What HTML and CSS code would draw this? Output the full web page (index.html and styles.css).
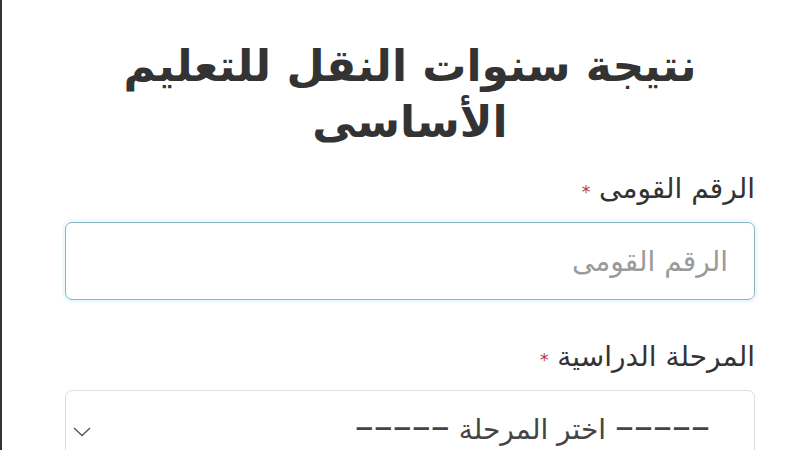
FILE: index.html
```html
<!DOCTYPE html>
<html lang="ar" dir="rtl">
<head>
<meta charset="utf-8">
<link rel="stylesheet" href="styles.css">
</head>
<body>
<div class="page">
  <div class="form">
    <h1 class="title">نتيجة سنوات النقل للتعليم الأساسى</h1>
    <div class="field">
      <label class="label">الرقم القومى <span class="req">*</span></label>
      <div class="input focused"><span class="placeholder">الرقم القومى</span></div>
    </div>
    <div class="field">
      <label class="label">المرحلة الدراسية <span class="req">*</span></label>
      <div class="select">
        <span class="select-text"><span class="dashes">–––––</span> اختر المرحلة <span class="dashes">–––––</span></span>
        <svg class="chev" width="18" height="10" viewBox="0 0 18 10"><path d="M1 1 L9 8.5 L17 1" fill="none" stroke="#555" stroke-width="1.4"/></svg>
      </div>
    </div>
  </div>
</div>
</body>
</html>
```

FILE: styles.css
```css
html, body {
  margin: 0;
  padding: 0;
  background: #fff;
}
body {
  font-family: "DejaVu Sans", sans-serif;
  color: #333;
  overflow: hidden;
}
.page {
  height: 450px;
  border-left: 2px solid #333;
  box-sizing: border-box;
  padding: 38px 45px 0 63px;
  overflow: hidden;
}
.title {
  margin: 0 0 21px;
  text-align: center;
  font-size: 44px;
  line-height: 56px;
  font-weight: bold;
  color: #333;
}
.field {
  margin-bottom: 39px;
}
.label {
  display: block;
  font-size: 28px;
  line-height: 36px;
  margin-bottom: 12px;
  color: #333;
}
.req {
  color: #b8383a;
  font-size: 17px;
}
.input {
  height: 78px;
  box-sizing: border-box;
  border: 1px solid #8ab2c2;
  border-radius: 7px;
  box-shadow: 0 0 0 3px #eefafd;
  display: flex;
  align-items: center;
  padding: 0 26px;
}
.placeholder {
  font-size: 28px;
  color: #9a9a9a;
}
.select {
  height: 80px;
  box-sizing: border-box;
  border: 1px solid #ddd;
  border-radius: 7px;
  display: flex;
  align-items: center;
  justify-content: space-between;
  padding: 0 44px 0 7px;
}
.select-text {
  font-size: 28px;
  line-height: 36px;
  color: #444;
}
.dashes {
  font-size: 38px;
  line-height: 28px;
  letter-spacing: 3px;
}
.chev {
  margin-top: 4px;
}
```
